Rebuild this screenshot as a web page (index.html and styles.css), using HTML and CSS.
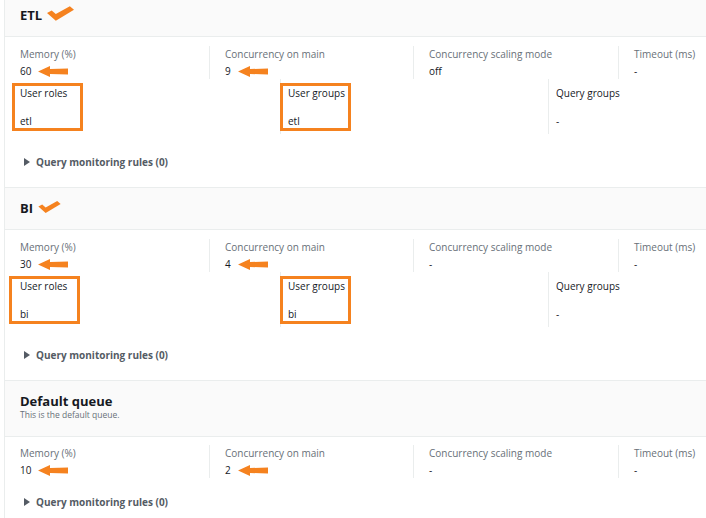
FILE: index.html
```html
<!DOCTYPE html>
<html>
<head>
  <meta charset="utf-8">
  <title>Workload queues</title>
  <link rel="stylesheet" href="styles.css">
</head>
<body>
  <div class="queues">

    <!-- ETL -->
    <div class="queue first">
      <div class="queue-head">
        <div class="queue-title">ETL <svg class="tick" width="27" height="15" viewBox="0 0 26 14"><polygon points="0,6.5 4.5,4 8.5,7.5 22,0 26,3.5 8.5,14"/></svg></div>
      </div>
      <div class="queue-body">
        <div class="row-main">
          <div class="cell">
            <div class="label">Memory (%)</div>
            <div class="value">60 <svg class="arrow" width="30" height="11" viewBox="0 0 30 11"><polygon points="0,5.5 12,0 12,3 30,2.5 30,8.5 12,8 12,11"/></svg></div>
          </div>
          <div class="cell">
            <div class="label">Concurrency on main</div>
            <div class="value">9 <svg class="arrow" width="30" height="11" viewBox="0 0 30 11"><polygon points="0,5.5 12,0 12,3 30,2.5 30,8.5 12,8 12,11"/></svg></div>
          </div>
          <div class="cell">
            <div class="label">Concurrency scaling mode</div>
            <div class="value">off</div>
          </div>
          <div class="cell">
            <div class="label">Timeout (ms)</div>
            <div class="value">-</div>
          </div>
        </div>
        <div class="row-groups">
          <div class="cell">
            <div class="field marked">
              <div class="label dark">User roles</div>
              <div class="value">etl</div>
            </div>
          </div>
          <div class="cell">
            <div class="field marked">
              <div class="label dark">User groups</div>
              <div class="value">etl</div>
            </div>
          </div>
          <div class="cell">
            <div class="field">
              <div class="label dark">Query groups</div>
              <div class="value">-</div>
            </div>
          </div>
        </div>
        <div class="rules"><span class="caret"></span>Query monitoring rules (0)</div>
      </div>
    </div>

    <!-- BI -->
    <div class="queue">
      <div class="queue-head">
        <div class="queue-title">BI <svg class="tick small" width="25" height="12" viewBox="0 0 26 14"><polygon points="0,6.5 4.5,4 8.5,7.5 22,0 26,3.5 8.5,14"/></svg></div>
      </div>
      <div class="queue-body">
        <div class="row-main">
          <div class="cell">
            <div class="label">Memory (%)</div>
            <div class="value">30 <svg class="arrow" width="30" height="11" viewBox="0 0 30 11"><polygon points="0,5.5 12,0 12,3 30,2.5 30,8.5 12,8 12,11"/></svg></div>
          </div>
          <div class="cell">
            <div class="label">Concurrency on main</div>
            <div class="value">4 <svg class="arrow" width="30" height="11" viewBox="0 0 30 11"><polygon points="0,5.5 12,0 12,3 30,2.5 30,8.5 12,8 12,11"/></svg></div>
          </div>
          <div class="cell">
            <div class="label">Concurrency scaling mode</div>
            <div class="value">-</div>
          </div>
          <div class="cell">
            <div class="label">Timeout (ms)</div>
            <div class="value">-</div>
          </div>
        </div>
        <div class="row-groups">
          <div class="cell">
            <div class="field marked shift">
              <div class="label dark">User roles</div>
              <div class="value">bi</div>
            </div>
          </div>
          <div class="cell">
            <div class="field marked">
              <div class="label dark">User groups</div>
              <div class="value">bi</div>
            </div>
          </div>
          <div class="cell">
            <div class="field">
              <div class="label dark">Query groups</div>
              <div class="value">-</div>
            </div>
          </div>
        </div>
        <div class="rules"><span class="caret"></span>Query monitoring rules (0)</div>
      </div>
    </div>

    <!-- Default -->
    <div class="queue">
      <div class="queue-head tall">
        <div class="queue-title">Default queue</div>
        <div class="queue-desc">This is the default queue.</div>
      </div>
      <div class="queue-body short">
        <div class="row-main">
          <div class="cell">
            <div class="label">Memory (%)</div>
            <div class="value">10 <svg class="arrow" width="30" height="11" viewBox="0 0 30 11"><polygon points="0,5.5 12,0 12,3 30,2.5 30,8.5 12,8 12,11"/></svg></div>
          </div>
          <div class="cell">
            <div class="label">Concurrency on main</div>
            <div class="value">2 <svg class="arrow" width="30" height="11" viewBox="0 0 30 11"><polygon points="0,5.5 12,0 12,3 30,2.5 30,8.5 12,8 12,11"/></svg></div>
          </div>
          <div class="cell">
            <div class="label">Concurrency scaling mode</div>
            <div class="value">-</div>
          </div>
          <div class="cell">
            <div class="label">Timeout (ms)</div>
            <div class="value">-</div>
          </div>
        </div>
        <div class="rules"><span class="caret"></span>Query monitoring rules (0)</div>
      </div>
    </div>

  </div>
</body>
</html>
```

FILE: styles.css
```css
html, body {
  margin: 0;
  overflow: hidden;
  background: #ffffff;
}

body {
  font-family: "Open Sans", "Noto Sans", sans-serif;
  color: #16191f;
}

.queues {
  margin-left: 4px;
  overflow: hidden;
  border-left: 1px solid #eaeded;
}

/* header */
.queue-head {
  box-sizing: border-box;
  height: 43px;
  padding: 11px 0 0 15px;
  background: #fafafa;
  border-top: 1px solid #eaeded;
  border-bottom: 1px solid #eaeded;
}

.queue.first .queue-head {
  margin-top: -6px;
}

.queue-head.tall {
  height: 57px;
}

.queue-title {
  font-size: 13px;
  font-weight: 700;
  line-height: 18px;
}

.queue-desc {
  font-size: 8.5px;
  line-height: 10px;
  color: #687078;
}

.tick {
  fill: #f5821f;
  vertical-align: -1px;
  margin-left: 1px;
}

.tick.small {
  vertical-align: 0;
}

/* body */
.queue-body {
  padding-bottom: 17px;
}

.row-main {
  display: grid;
  grid-template-columns: 204px 204px 205px 205px;
  padding-top: 9px;
}

.queue-body.short .row-main {
  padding-top: 8px;
}

.row-main .cell {
  padding-left: 15px;
  white-space: nowrap;
}

.row-main .cell + .cell {
  border-left: 1px solid #eaeded;
}

.label {
  font-size: 10px;
  line-height: 16px;
  color: #687078;
}

.value {
  font-size: 10px;
  line-height: 16px;
  margin-top: 1px;
  display: flex;
  align-items: center;
}

.arrow {
  fill: #f5821f;
  margin-left: 7px;
}

.row-groups {
  display: grid;
  grid-template-columns: 275px 268px 268px;
}

.row-groups .cell {
  padding: 4px 0 3px 15px;
  white-space: nowrap;
}

.row-groups .cell + .cell {
  border-left: 1px solid #eaeded;
  padding-left: 7px;
}

.field {
  box-sizing: border-box;
  margin-left: -8px;
  padding-left: 5px;
  border: 3px solid transparent;
}

.field.marked {
  width: 71px;
  border-color: #f5821f;
}

.field.shift {
  margin-left: -11px;
  padding-left: 8px;
}

.field .label {
  line-height: 14px;
}

.field .label.dark {
  color: #16191f;
}

.field .value {
  line-height: 14px;
  margin-top: 14px;
}

.rules {
  margin-top: 20px;
  padding-left: 19px;
  font-size: 10px;
  font-weight: 700;
  line-height: 16px;
  color: #545b64;
  display: flex;
  align-items: center;
}

.queue-body.short .rules {
  margin-top: 16px;
}

.caret {
  width: 0;
  height: 0;
  border-left: 6px solid #545b64;
  border-top: 4px solid transparent;
  border-bottom: 4px solid transparent;
  margin-right: 6px;
}
```
